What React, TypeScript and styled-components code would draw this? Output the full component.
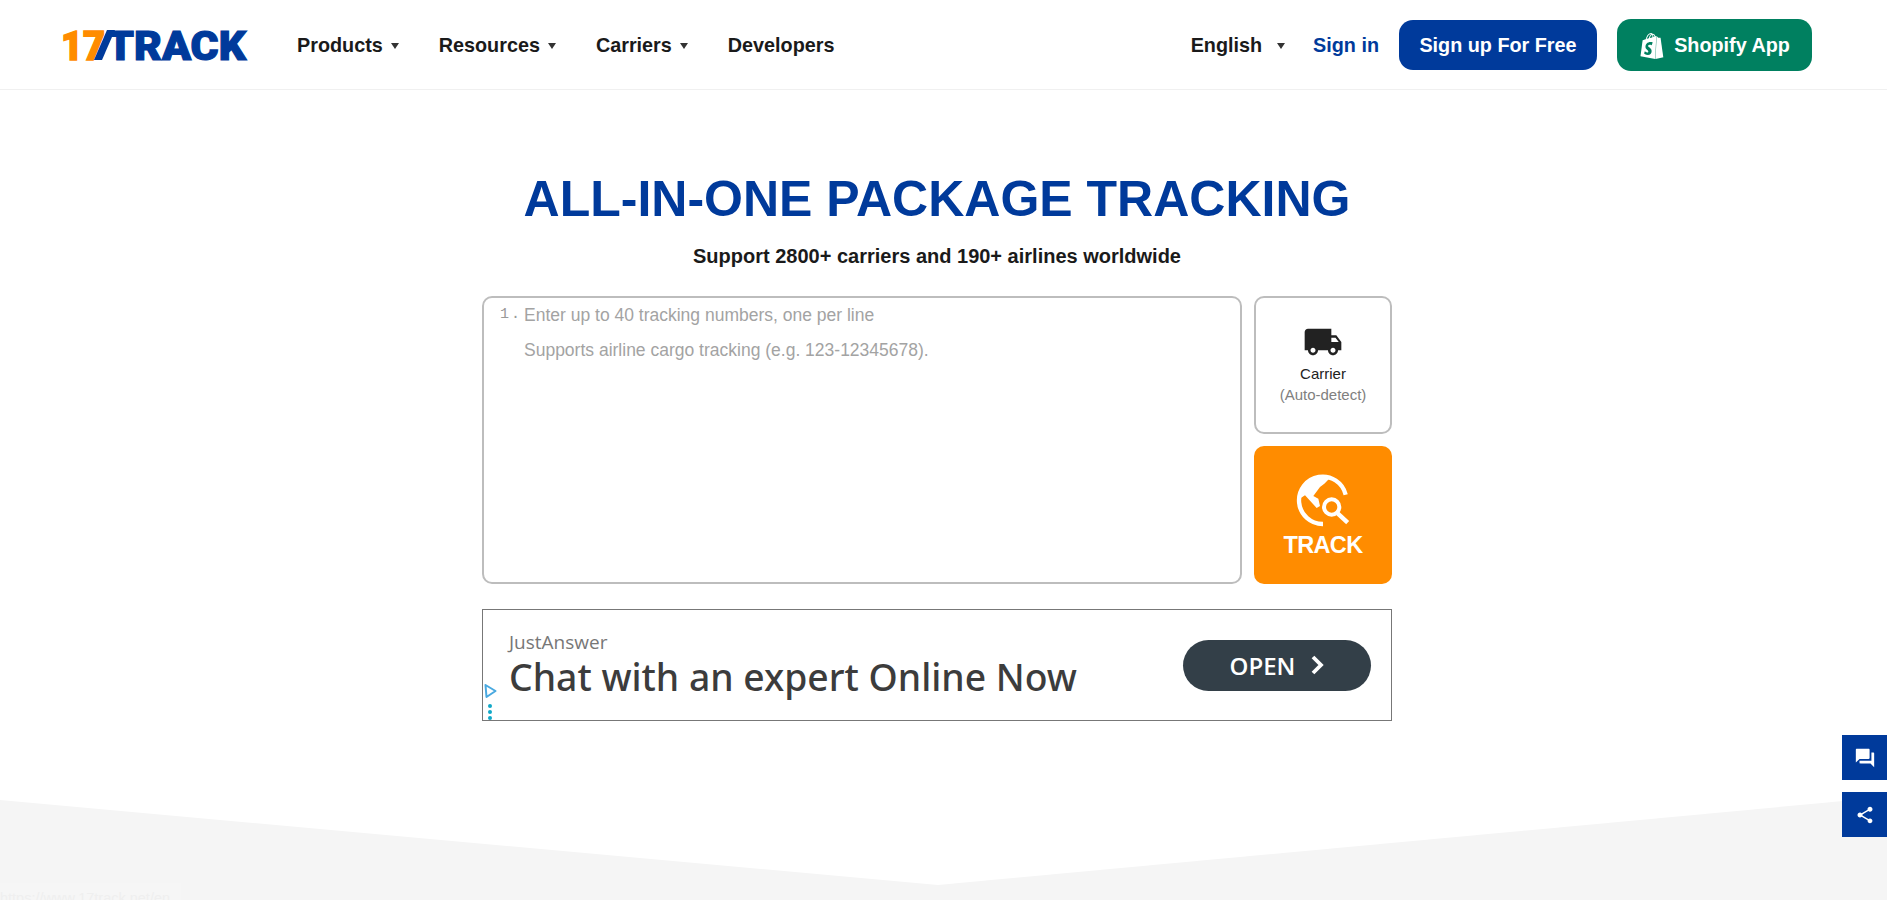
import styled, { createGlobalStyle } from "styled-components";
import { MdLocalShipping, MdQuestionAnswer, MdShare } from "react-icons/md";
import { SiShopify } from "react-icons/si";

const BLUE = "#003a9b";

const navItems = [
  { label: "Products", caret: true },
  { label: "Resources", caret: true },
  { label: "Carriers", caret: true },
  { label: "Developers", caret: false },
];

const App = () => {
  return (
    <>
      <GlobalStyle />
      <Header>
        <Logo aria-label="17TRACK">
          <svg width="186" height="30" viewBox="0 0 186 30">
            <text x="0" y="29.5" fill="#ff8c00" stroke="#ff8c00" strokeWidth="1.6" fontFamily="Roboto" fontWeight="900" fontSize="41" textLength="44" lengthAdjust="spacingAndGlyphs">
              17
            </text>
            <polygon points="46,0 33,30 41,30 54,0" fill={BLUE} />
            <text x="46" y="29.5" fill={BLUE} stroke={BLUE} strokeWidth="1.2" fontFamily="Roboto" fontWeight="900" fontSize="41" textLength="139" lengthAdjust="spacingAndGlyphs">
              TRACK
            </text>
          </svg>
        </Logo>
        <Nav>
          {navItems.map((item) => (
            <NavLink key={item.label}>
              {item.label}
              {item.caret && <Caret />}
            </NavLink>
          ))}
        </Nav>
        <HeaderRight>
          <LangSwitch>
            English
            <Caret />
          </LangSwitch>
          <SignIn>Sign in</SignIn>
          <SignUp>Sign up For Free</SignUp>
          <ShopifyBtn>
            <SiShopify size={26} />
            Shopify App
          </ShopifyBtn>
        </HeaderRight>
      </Header>
      <Hero>
        <Title>ALL-IN-ONE PACKAGE TRACKING</Title>
        <Subtitle>Support 2800+ carriers and 190+ airlines worldwide</Subtitle>
        <TrackForm>
          <NumberBox>
            <Gutter>1.</Gutter>
            <Hints>
              <Hint>Enter up to 40 tracking numbers, one per line</Hint>
              <Hint>Supports airline cargo tracking (e.g. 123-12345678).</Hint>
            </Hints>
          </NumberBox>
          <SideColumn>
            <CarrierCard>
              <MdLocalShipping size={40} color="#222" />
              <CarrierName>Carrier</CarrierName>
              <CarrierHint>(Auto-detect)</CarrierHint>
            </CarrierCard>
            <TrackButton>
              <svg width="57" height="57" viewBox="30 20 171 171" fill="none">
                <path d="M182 88 A71 71 0 1 0 114 176" stroke="#fff" strokeWidth="13" />
                <path d="M137 36 L118 55 L105 65 L85 92 L100 100 L105 122 L95 128 L60 90 L44 100 A71 71 0 0 1 137 36 Z" fill="#fff" />
                <circle cx="140" cy="125" r="23" stroke="#ff8c00" strokeWidth="21" />
                <circle cx="140" cy="125" r="23" stroke="#fff" strokeWidth="12" />
                <line x1="158" y1="144" x2="188" y2="172" stroke="#fff" strokeWidth="13" />
              </svg>
              <TrackLabel>TRACK</TrackLabel>
            </TrackButton>
          </SideColumn>
        </TrackForm>
        <AdBanner>
          <AdCopy>
            <AdBrand>JustAnswer</AdBrand>
            <AdHeadline>Chat with an expert Online Now</AdHeadline>
          </AdCopy>
          <AdButton>
            OPEN
            <svg width="14" height="22" viewBox="0 0 14 22" fill="none">
              <path d="M3 3 L11 11 L3 19" stroke="#fff" strokeWidth="3.8" />
            </svg>
          </AdButton>
          <AdMark>
            <svg width="15" height="37" viewBox="0 0 15 37" fill="none">
              <path d="M2.5 2 L12.5 8 L3.5 14 Z" stroke="#4aa9e0" strokeWidth="2" strokeLinejoin="round" />
              <circle cx="7" cy="23" r="2" fill="#10a8c8" />
              <circle cx="7" cy="29" r="2" fill="#10a8c8" />
              <circle cx="7" cy="35" r="2" fill="#10a8c8" />
            </svg>
          </AdMark>
        </AdBanner>
      </Hero>
      <Chevron />
      <StatusUrl>https://www.17track.net/en</StatusUrl>
      <FloatButtons>
        <FloatButton>
          <MdQuestionAnswer size={22} />
        </FloatButton>
        <FloatButton>
          <MdShare size={20} />
        </FloatButton>
      </FloatButtons>
    </>
  );
};

export default App;

const GlobalStyle = createGlobalStyle`
  html, body {
    margin: 0;
    height: 100%;
    overflow: hidden;
    background: #ffffff;
    font-family: "Liberation Sans", Arial, sans-serif;
    color: #1a1a1a;
  }
`;

const Header = styled.header`
  height: 90px;
  box-sizing: border-box;
  border-bottom: 1px solid #f0f0f0;
  padding: 0 75px 0 61px;
  display: flex;
  align-items: center;
`;

const Logo = styled.div`
  width: 186px;
  height: 30px;
  margin-right: 50px;
  svg {
    display: block;
    overflow: visible;
  }
`;

const Nav = styled.nav`
  display: flex;
  align-items: center;
  gap: 40px;
`;

const NavLink = styled.a`
  font-size: 19.8px;
  font-weight: 700;
  padding-top: 2px;
  display: flex;
  align-items: center;
  gap: 8px;
`;

const Caret = styled.i`
  width: 0;
  height: 0;
  border-left: 4px solid transparent;
  border-right: 4px solid transparent;
  border-top: 6px solid #333;
`;

const HeaderRight = styled.div`
  margin-left: auto;
  display: flex;
  align-items: center;
`;

const LangSwitch = styled(NavLink)`
  gap: 15px;
  margin-right: 28px;
`;

const SignIn = styled.a`
  color: ${BLUE};
  font-size: 19.8px;
  font-weight: 700;
  padding-top: 2px;
  margin-right: 20px;
`;

const SignUp = styled.button`
  width: 198px;
  height: 50px;
  border: 0;
  border-radius: 14px;
  padding: 2px 0 0;
  background: ${BLUE};
  color: #fff;
  font: 700 19.8px "Liberation Sans", Arial, sans-serif;
  margin-right: 20px;
`;

const ShopifyBtn = styled(SignUp)`
  width: 195px;
  height: 52px;
  margin-right: 0;
  background: #008060;
  display: flex;
  align-items: center;
  justify-content: center;
  gap: 9px;
`;

const Hero = styled.main`
  display: flex;
  flex-direction: column;
  align-items: center;
  padding: 78px 13px 76px 0;
`;

const Title = styled.h1`
  margin: 0;
  font-size: 50px;
  line-height: 62px;
  font-weight: 700;
  color: ${BLUE};
`;

const Subtitle = styled.p`
  margin: 14px 0 0;
  font-size: 20px;
  line-height: 24px;
  font-weight: 700;
`;

const TrackForm = styled.div`
  margin-top: 28px;
  width: 910px;
  display: flex;
  gap: 12px;
`;

const NumberBox = styled.div`
  flex: 1;
  height: 288px;
  box-sizing: border-box;
  border: 2px solid #bdbdbd;
  border-radius: 10px;
  padding: 0 16px;
  display: flex;
  gap: 9px;
`;

const Gutter = styled.div`
  font-family: "Liberation Mono", monospace;
  font-size: 15px;
  letter-spacing: 2px;
  line-height: 33px;
  color: #999;
  width: 15px;
  white-space: nowrap;
`;

const Hints = styled.div`
  display: flex;
  flex-direction: column;
`;

const Hint = styled.div`
  font-size: 17.5px;
  line-height: 35px;
  color: #a3a3a3;
`;

const SideColumn = styled.div`
  width: 138px;
  display: flex;
  flex-direction: column;
  gap: 12px;
`;

const CarrierCard = styled.div`
  height: 138px;
  box-sizing: border-box;
  border: 2px solid #bdbdbd;
  border-radius: 10px;
  display: flex;
  flex-direction: column;
  align-items: center;
  padding-top: 24px;
`;

const CarrierName = styled.div`
  font-size: 15px;
  line-height: 20px;
  color: #222;
  margin-top: 2px;
`;

const CarrierHint = styled.div`
  font-size: 15px;
  line-height: 22px;
  color: #808080;
`;

const TrackButton = styled.button`
  height: 138px;
  border: 0;
  padding: 0;
  border-radius: 10px;
  background: #ff8c00;
  display: flex;
  flex-direction: column;
  align-items: center;
  justify-content: center;
  gap: 2px;
`;

const TrackLabel = styled.span`
  color: #fff;
  font-size: 23.5px;
  line-height: 28px;
  font-weight: 700;
  letter-spacing: -0.6px;
`;

const AdBanner = styled.aside`
  position: relative;
  margin-top: 25px;
  width: 910px;
  height: 112px;
  box-sizing: border-box;
  border: 1px solid #777;
  padding: 0 20px 0 26px;
  display: flex;
  align-items: center;
  justify-content: space-between;
`;

const AdCopy = styled.div`
  display: flex;
  flex-direction: column;
`;

const AdBrand = styled.div`
  font-family: "Open Sans", sans-serif;
  font-size: 19px;
  line-height: 24px;
  color: #777;
`;

const AdHeadline = styled.div`
  font-family: "Noto Sans", sans-serif;
  font-size: 37.3px;
  line-height: 46px;
  font-weight: 500;
  color: #3c3c3c;
`;

const AdButton = styled.button`
  width: 188px;
  height: 51px;
  border: 0;
  border-radius: 26px;
  background: #333f48;
  color: #fff;
  font: 600 24px "Open Sans", sans-serif;
  display: flex;
  align-items: center;
  justify-content: center;
  gap: 15px;
`;

const AdMark = styled.div`
  position: absolute;
  left: 0;
  bottom: 0;
  line-height: 0;
`;

const Chevron = styled.div`
  height: 104px;
  background: #f5f5f5;
  clip-path: polygon(0 3px, 938px 88px, 100% 0, 100% 100%, 0 100%);
`;

const StatusUrl = styled.div`
  position: fixed;
  left: 0;
  top: 883px;
  width: 181px;
  height: 17px;
  overflow: hidden;
  background: #f6f6f6;
  color: #efefef;
  font-size: 14.5px;
  line-height: 14px;
  padding-top: 8px;
  box-sizing: border-box;
  white-space: nowrap;
`;

const FloatButtons = styled.div`
  position: fixed;
  right: 0;
  top: 735px;
  display: flex;
  flex-direction: column;
  gap: 12px;
`;

const FloatButton = styled.button`
  width: 45px;
  height: 45px;
  border: 0;
  padding: 0;
  background: ${BLUE};
  color: #fff;
  display: flex;
  align-items: center;
  justify-content: center;
`;
